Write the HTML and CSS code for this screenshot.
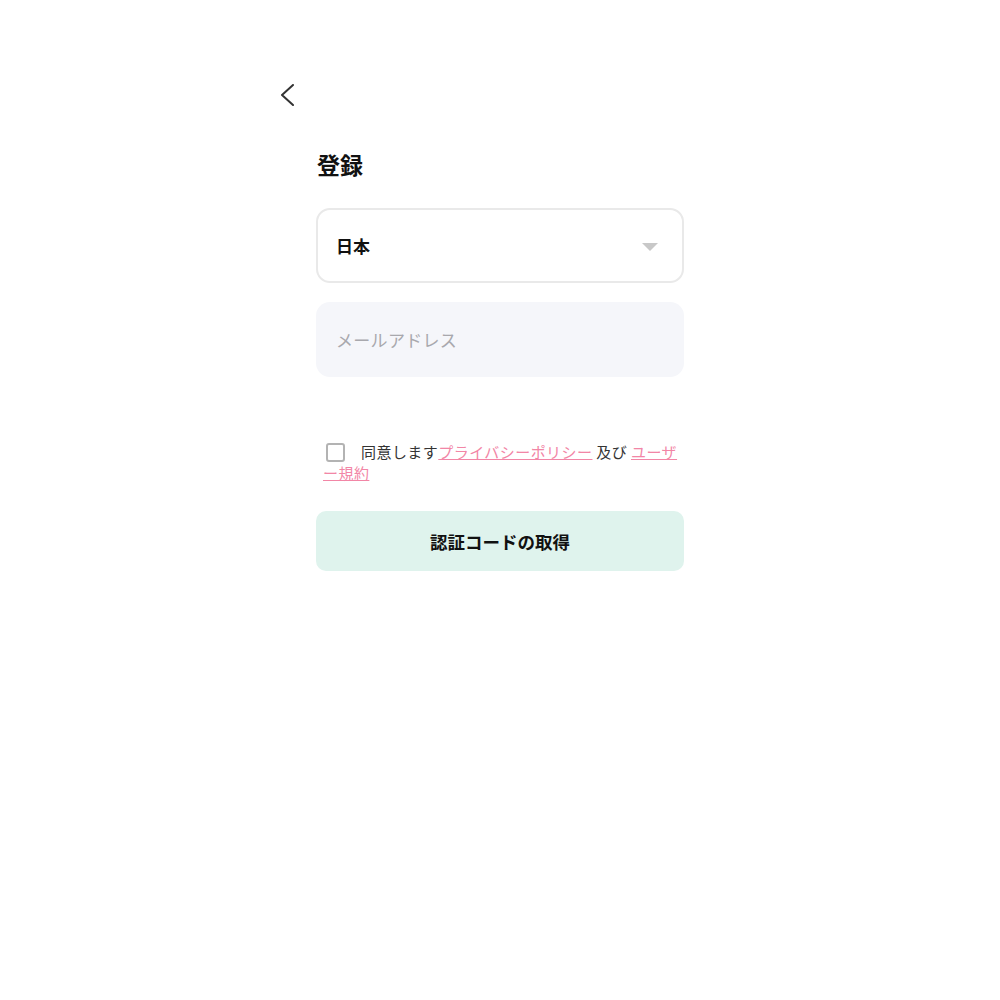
FILE: index.html
```html
<!DOCTYPE html>
<html lang="ja">
<head>
<meta charset="utf-8">
<link rel="stylesheet" href="styles.css">
</head>
<body>
<div class="page">
  <div class="back">
    <svg width="14" height="22" viewBox="0 0 14 22"><path d="M13 1 L2 11 L13 21" fill="none" stroke="#333" stroke-width="2" stroke-linecap="round" stroke-linejoin="round"/></svg>
  </div>
  <div class="form">
    <h1 class="title">登録</h1>
    <div class="select">
      <span class="select-value">日本</span>
      <span class="caret"></span>
    </div>
    <div class="input">
      <span class="placeholder">メールアドレス</span>
    </div>
    <div class="agree">
      <span class="checkbox"></span><span class="agree-text">同意します<a class="link">プライバシーポリシー</a> 及び <a class="link">ユーザー規約</a></span>
    </div>
    <div class="button">認証コードの取得</div>
  </div>
</div>
</body>
</html>
```
FILE: styles.css
```css
html, body {
  margin: 0;
  padding: 0;
  background: #fff;
  font-family: "Noto Sans CJK JP", "Noto Sans", sans-serif;
  color: #222;
}
.page {
  padding-top: 84px;
}
.back {
  margin-left: 280px;
  height: 22px;
}
.back svg {
  display: block;
}
.form {
  width: 368px;
  margin-left: 316px;
}
.title {
  margin: 42px 0 0 1px;
  font-size: 23px;
  line-height: 32px;
  font-weight: 700;
  color: #111;
}
.select {
  margin-top: 28px;
  height: 75px;
  box-sizing: border-box;
  border: 2px solid #e9e9e9;
  border-radius: 14px;
  display: flex;
  align-items: center;
  justify-content: space-between;
  padding: 0 24px 0 18px;
}
.select-value {
  font-size: 17px;
  font-weight: 700;
  color: #111;
}
.caret {
  width: 0;
  height: 0;
  border-left: 8px solid transparent;
  border-right: 8px solid transparent;
  border-top: 8px solid #c8c8c8;
  margin-top: 2px;
}
.input {
  margin-top: 19px;
  height: 75px;
  border-radius: 14px;
  background: #f5f6fa;
  display: flex;
  align-items: center;
  padding: 0 20px;
}
.placeholder {
  font-size: 17px;
  letter-spacing: 0.3px;
  color: #a8a8ad;
}
.agree {
  margin-top: 64px;
  padding: 0 4px 0 7px;
  font-size: 15px;
  line-height: 21px;
  letter-spacing: 0.45px;
  color: #333;
}
.checkbox {
  display: inline-block;
  width: 19px;
  height: 19px;
  box-sizing: border-box;
  border: 2px solid #b3b3b3;
  border-radius: 3px;
  vertical-align: -4px;
  margin: 0 16px 0 3px;
}
.link {
  color: #f286a6;
  text-decoration: underline;
}
.button {
  margin-top: 28px;
  height: 60px;
  border-radius: 10px;
  background: #dff3ed;
  display: flex;
  align-items: center;
  justify-content: center;
  font-size: 17.5px;
  font-weight: 700;
  color: #111;
}
```
